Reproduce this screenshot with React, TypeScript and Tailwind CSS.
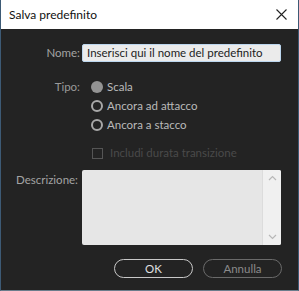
import React from 'react';

const Radio = ({ checked, label }: { checked?: boolean; label: string }) => (
  <div className="flex items-center h-[19px]">
    {checked ? (
      <span className="w-[12px] h-[12px] rounded-full bg-[#939393] ml-[90px]" />
    ) : (
      <span className="w-[12px] h-[12px] rounded-full border-2 border-[#a8a8a8] ml-[90px]" />
    )}
    <span className="ml-[4px] text-[11.5px] text-[#bababa] whitespace-nowrap">{label}</span>
  </div>
);

export default function App() {
  return (
    <div
      className="w-[299px] h-[291px] bg-[#232323] flex flex-col border-x border-[#3d5a75] border-b border-b-[#6b7d8c] overflow-hidden"
      style={{ fontFamily: 'Lato, "Noto Sans", sans-serif' }}
    >
      {/* Title bar */}
      <div className="h-[29px] bg-white flex items-center justify-between pl-[8px] pr-[10px] shrink-0">
        <span className="text-[12px] text-[#111]">Salva predefinito</span>
        <svg width="11" height="11" viewBox="0 0 11 11" className="mr-[1px]">
          <path d="M0.5 0.5 L10.5 10.5 M10.5 0.5 L0.5 10.5" stroke="#222" strokeWidth="1.1" />
        </svg>
      </div>

      {/* Body */}
      <div className="flex flex-col pt-[15px]">
        <div className="flex items-center h-[18px]">
          <span className="w-[81px] text-right pr-[2px] text-[11.5px] text-[#a3a3a3]">Nome:</span>
          <div className="w-[199px] h-[18px] bg-[#ebebeb] border border-[#bcd6ee] rounded-[2px] flex items-center pl-[4px] text-[11.5px] text-[#1c1c1c] whitespace-nowrap">
            Inserisci qui il nome del predefinito
          </div>
        </div>

        <div className="flex flex-col mt-[15px] relative">
          <span className="absolute left-0 top-[1px] w-[79px] text-right text-[11.5px] text-[#9a9a9a]">Tipo:</span>
          <Radio checked label="Scala" />
          <Radio label="Ancora ad attacco" />
          <Radio label="Ancora a stacco" />
        </div>

        <div className="flex items-center mt-[12px] h-[14px]">
          <span className="ml-[91px] w-[11px] h-[11px] border border-[#555]" />
          <span className="ml-[7px] text-[11.5px] text-[#4a4a4a] whitespace-nowrap">Includi durata transizione</span>
        </div>

        <div className="flex mt-[10px]">
          <span className="w-[81px] text-right pr-[4px] text-[11.5px] text-[#a3a3a3] pt-[1px]">Descrizione:</span>
          <div className="w-[199px] h-[75px] bg-[#e6e6e6] rounded-[2px] flex justify-end overflow-hidden">
            <div className="w-[19px] h-full bg-[#f0f0f0] border-l border-[#dcdcdc] flex flex-col items-center justify-between py-[5px]">
              <svg width="9" height="6" viewBox="0 0 9 6">
                <path d="M1 5 L4.5 1.5 L8 5" stroke="#b8b8b8" strokeWidth="1.2" fill="none" />
              </svg>
              <svg width="9" height="6" viewBox="0 0 9 6">
                <path d="M1 1 L4.5 4.5 L8 1" stroke="#b8b8b8" strokeWidth="1.2" fill="none" />
              </svg>
            </div>
          </div>
        </div>

        <div className="flex justify-end gap-[10px] mt-[14px] pr-[16px]">
          <button className="w-[79px] h-[19px] rounded-full border border-[#c8c8c8] text-[11.5px] text-[#e0e0e0] flex items-center justify-center">
            OK
          </button>
          <button className="w-[79px] h-[19px] rounded-full border border-[#6a6a6a] text-[11.5px] text-[#8a8a8a] flex items-center justify-center">
            Annulla
          </button>
        </div>
      </div>
    </div>
  );
}
